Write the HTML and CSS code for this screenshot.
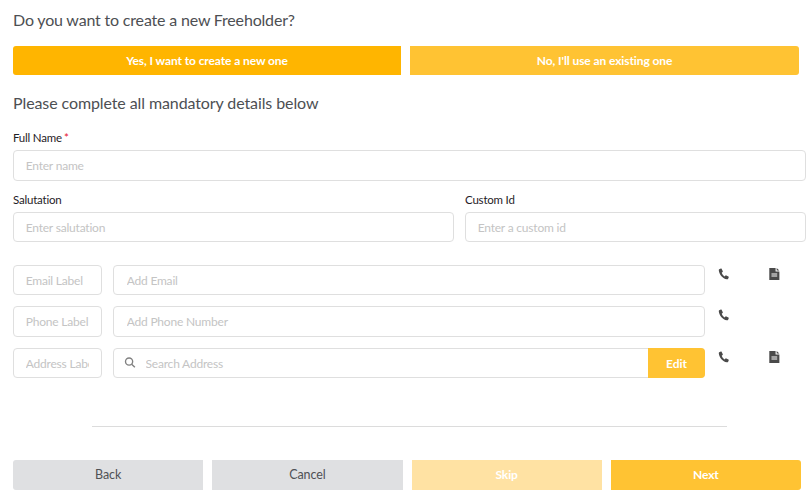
FILE: index.html
```html
<!DOCTYPE html>
<html lang="en">
<head>
<meta charset="utf-8">
<title>Create Freeholder</title>
<link rel="stylesheet" href="styles.css">
</head>
<body>
<form class="page">
  <h2 class="q-title">Do you want to create a new Freeholder?</h2>
  <div class="choice">
    <button type="button" class="btn btn-start btn-active">Yes, I want to create a new one</button>
    <button type="button" class="btn btn-end btn-yellow">No, I'll use an existing one</button>
  </div>
  <h2 class="sub-title">Please complete all mandatory details below</h2>
  <label class="label label-full">Full Name<span class="req">*</span></label>
  <input class="input input-name" placeholder="Enter name">
  <div class="two-col">
    <div class="col-left">
      <label class="label">Salutation</label>
      <input class="input" placeholder="Enter salutation">
    </div>
    <div class="col-right">
      <label class="label">Custom Id</label>
      <input class="input" placeholder="Enter a custom id">
    </div>
  </div>
  <div class="contact contact-email">
    <input class="input tag" placeholder="Email Label">
    <input class="input value" placeholder="Add Email">
    <div class="actions">
      <svg class="ico" viewBox="0 0 12 12"><path d="M2.900 .6 1.200 1.200C.8 1.400.7 1.800.8 2.400c.5 4.300 3.900 8.100 8 8.900.6.100 1 0 1.200-.4l.7-1.500c.1-.3 0-.6-.3-.8L8.300 7.400c-.3-.1-.6-.1-.8.200l-.7.900C5.400 7.800 4.200 6.300 3.700 4.800l.9-.8c.2-.2.3-.5.200-.8L3.700.9C3.500.6 3.200.5 2.900.6z"/></svg>
      <svg class="ico doc" viewBox="0 0 12 12" preserveAspectRatio="none"><path fill-rule="evenodd" d="M1.200 0H7v3.400h3.500V12H1.200zM8 0l2.500 2.500H8zM3.200 5.500v1h5.300v-1zM3.200 7.500v1h5.300v-1z"/></svg>
    </div>
  </div>
  <div class="contact contact-phone">
    <input class="input tag" placeholder="Phone Label">
    <input class="input value" placeholder="Add Phone Number">
    <div class="actions">
      <svg class="ico" viewBox="0 0 12 12"><path d="M2.900 .6 1.200 1.200C.8 1.400.7 1.800.8 2.400c.5 4.300 3.900 8.100 8 8.900.6.100 1 0 1.200-.4l.7-1.500c.1-.3 0-.6-.3-.8L8.300 7.400c-.3-.1-.6-.1-.8.200l-.7.900C5.400 7.800 4.200 6.300 3.700 4.800l.9-.8c.2-.2.3-.5.200-.8L3.700.9C3.500.6 3.200.5 2.900.6z"/></svg>
    </div>
  </div>
  <div class="contact contact-address">
    <input class="input tag" placeholder="Address Label">
    <div class="search">
      <svg class="search-ico" viewBox="0 0 12 12"><circle cx="5" cy="5" r="3.900"/><path d="M7.800 7.800 11.300 11.300"/></svg>
      <input class="search-input" placeholder="Search Address">
      <button type="button" class="edit">Edit</button>
    </div>
    <div class="actions">
      <svg class="ico" viewBox="0 0 12 12"><path d="M2.900 .6 1.200 1.200C.8 1.400.7 1.800.8 2.400c.5 4.300 3.900 8.100 8 8.900.6.100 1 0 1.200-.4l.7-1.500c.1-.3 0-.6-.3-.8L8.300 7.400c-.3-.1-.6-.1-.8.200l-.7.900C5.400 7.800 4.200 6.300 3.700 4.800l.9-.8c.2-.2.3-.5.200-.8L3.700.9C3.500.6 3.200.5 2.900.6z"/></svg>
      <svg class="ico doc" viewBox="0 0 12 12" preserveAspectRatio="none"><path fill-rule="evenodd" d="M1.200 0H7v3.400h3.500V12H1.200zM8 0l2.500 2.500H8zM3.200 5.500v1h5.300v-1zM3.200 7.500v1h5.300v-1z"/></svg>
    </div>
  </div>
  <hr class="divider">
  <div class="footer">
    <button type="button" class="btn fbtn btn-start btn-grey">Back</button>
    <button type="button" class="btn fbtn btn-grey">Cancel</button>
    <button type="button" class="btn fbtn btn-pale">Skip</button>
    <button type="button" class="btn fbtn btn-end btn-yellow">Next</button>
  </div>
</form>
</body>
</html>
```

FILE: styles.css
```css
* { box-sizing: border-box; }
html, body { margin: 0; background: #fff; }
body { font-family: Lato, "Liberation Sans", sans-serif; font-size: 12px; color: #4a4a4a; }
.page { width: 808px; height: 498px; padding: 10px 2px 0 13px; overflow: hidden; }
.q-title, .sub-title { margin: 0; font-size: 16px; font-weight: 400; line-height: 20px; color: #4d4f53; }
.q-title { letter-spacing: -0.18px; }
.sub-title { margin-top: 18px; letter-spacing: -0.1px; }
.choice { display: flex; gap: 9px; margin: 16px 7px 0 0; }
.btn { border: 0; padding: 0; font: 700 12px/1 Lato, "Liberation Sans", sans-serif; letter-spacing: -0.1px; color: #fff; height: 29px; flex: 1 1 0; }
.choice .btn-start { flex: 0 0 388px; }
.btn-start { border-radius: 3px 0 0 3px; }
.btn-end { border-radius: 0 3px 3px 0; }
.btn-active { background: #ffb500; }
.btn-yellow { background: #ffc333; }
.btn-pale { background: #ffe2a3; }
.btn-grey { background: #dfe0e2; color: #4f5155; font-weight: 400; font-size: 12.500px; }
.label { display: block; font-size: 11.500px; line-height: 14px; color: #1f2126; letter-spacing: -0.2px; }
.label-full { margin-top: 18px; }
.req { color: #e8112d; margin-left: 2px; }
.input { display: block; width: 100%; height: 30px; border: 1px solid #dfdfdf; border-radius: 4px; padding: 0 12px 0 11.700px; background: #fff; font: 400 12px Lato, "Liberation Sans", sans-serif; letter-spacing: -0.2px; color: #4a4a4a; outline: 0; }
.input::placeholder, .search-input::placeholder { color: #c4c4c4; opacity: 1; }
.input-name { height: 31px; margin-top: 5px; }
.two-col { display: flex; gap: 11px; margin-top: 12px; }
.col-left { flex: 0 0 441px; }
.col-right { flex: 1 1 0; }
.two-col .input { margin-top: 5px; }
.contact { display: flex; align-items: flex-start; gap: 11px; }
.contact-email { margin-top: 23px; }
.contact-phone { margin-top: 11px; }
.contact-phone .input { height: 31px; }
.contact-address { margin-top: 11px; }
.tag { flex: 0 0 89px; width: 89px; }
.value { flex: 0 0 592px; width: 592px; padding-left: 12.700px; }
.search { flex: 0 0 592px; display: flex; align-items: center; height: 30px; border: 1px solid #dfdfdf; border-radius: 4px; }
.search-ico { flex: none; width: 12px; height: 11px; margin: -2px 0 0 10px; fill: none; stroke: #808080; stroke-width: 1.500; }
.search-input { flex: 1 1 0; min-width: 0; height: 100%; border: 0; outline: 0; padding: 0 0 0 9.500px; background: transparent; font: 400 12px Lato, "Liberation Sans", sans-serif; letter-spacing: -0.2px; }
.edit { flex: none; width: 57px; height: 30px; margin: -1px -1px -1px 0; border: 0; border-radius: 0 4px 4px 0; background: #ffc333; color: #fff; font: 700 12px Lato, "Liberation Sans", sans-serif; }
.actions { display: flex; gap: 38px; padding: 3px 0 0 2px; }
.ico { display: block; width: 12px; height: 12px; fill: #4a4a4a; }
.doc { width: 13px; }
.divider { width: 635px; height: 1px; margin: 48px 0 0 79px; border: 0; background: #dcdcdc; }
.footer { display: flex; gap: 9px; margin: 33px 5px 0 0; }
.fbtn { height: 30px; }
```
